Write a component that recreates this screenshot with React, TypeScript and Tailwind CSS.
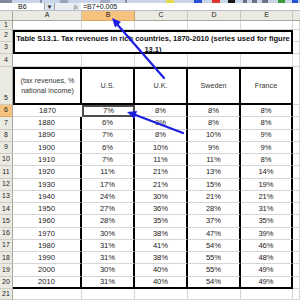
import React from "react";

const years = [1870,1880,1890,1900,1910,1920,1930,1940,1950,1960,1970,1980,1990,2000,2010];
const us = [7,6,7,6,7,11,17,24,27,28,30,31,31,30,31];
const uk = [8,9,8,10,11,21,21,30,36,35,38,41,38,40,40];
const se = [8,8,10,9,11,13,15,21,28,37,47,54,55,55,54];
const fr = [8,8,9,9,8,14,19,21,31,35,39,46,48,49,49];

const rh = "bg-[#ebeae2] border-r border-r-[#a9a89c] border-b border-b-[#cfcdc2] flex items-center justify-center text-[7px] text-[#222]";
const cell = "border-r border-r-[#d6d6d6] border-b border-b-[#d6d6d6]";
const txt = "flex items-center justify-center text-[7.6px] text-[#222]";

function RowHead({ n, sel, bottom }: { n: number; sel?: boolean; bottom?: boolean }) {
  return (
    <div
      className={
        sel
          ? "bg-[#f7c27d] border-r border-r-[#a9a89c] border-b border-b-[#d9a860] flex items-center justify-center text-[7px] text-[#222]"
          : bottom
          ? "bg-[#ebeae2] border-r border-r-[#a9a89c] border-b border-b-[#cfcdc2] flex items-end justify-center pb-[1px] text-[7px] text-[#222]"
          : rh
      }
    >
      {n}
    </div>
  );
}

export default function App() {
  const dataRows = years.map((y, i) => {
    const n = i + 6;
    const last = i === years.length - 1;
    const sel = i === 0;
    const bb = last ? " border-b-2 border-b-black" : "";
    return (
      <React.Fragment key={y}>
        <RowHead n={n} sel={sel} />
        <div className={`${txt} border-b border-b-[#d6d6d6] ${sel ? "" : "border-r-2 border-r-black"}${bb}`}>{y}</div>
        <div className={`${txt} ${sel ? "border-2 border-[#4d4d4d]" : "border-r-2 border-r-black border-b border-b-[#d6d6d6]"}${bb}`}>{us[i]}%</div>
        <div className={`${txt} border-r-2 border-r-black border-b border-b-[#d6d6d6]${bb}`}>{uk[i]}%</div>
        <div className={`${txt} border-r-2 border-r-black border-b border-b-[#d6d6d6]${bb}`}>{se[i]}%</div>
        <div className={`${txt} border-r-2 border-r-black border-b border-b-[#d6d6d6]${bb}`}>{fr[i]}%</div>
        <div className={cell}></div>
      </React.Fragment>
    );
  });

  return (
    <div className="relative w-[300px] h-[300px] overflow-hidden bg-white" style={{ fontFamily: '"Liberation Sans", Arial, sans-serif' }}>
      {/* toolbar strip */}
      <div className="h-[3px] bg-[#c8d5ea]">
        <svg width="300" height="3" className="block">
          <rect x="0" y="0" width="12" height="3" fill="#7e8aa0" />
          <rect x="40" y="0" width="2" height="3" fill="#8894a8" />
          <rect x="60" y="0" width="8" height="3" fill="#9aa4b8" />
          <rect x="100" y="0" width="10" height="3" fill="#a3acc0" />
          <rect x="125" y="0" width="2" height="3" fill="#8894a8" />
          <rect x="166" y="0" width="8" height="3" fill="#e8d84a" />
          <rect x="194" y="0" width="8" height="3" fill="#2a4fd8" />
          <rect x="212" y="0" width="8" height="3" fill="#e03030" />
          <rect x="228" y="0" width="7" height="3" fill="#1a1a1a" />
          <rect x="243" y="0" width="4" height="3" fill="#6a7488" />
          <rect x="252" y="0" width="5" height="3" fill="#6a7488" />
          <rect x="262" y="0" width="6" height="3" fill="#6a7488" />
          <rect x="278" y="0" width="7" height="3" fill="#3c9a3c" />
          <rect x="292" y="0" width="6" height="3" fill="#2a4fd8" />
        </svg>
      </div>
      {/* formula bar */}
      <div className="h-[8px] flex items-stretch bg-[#e9ecf2] border-b border-b-[#b9bdc6]">
        <div className="w-[45px] bg-white border-r border-r-[#9aa3b0] flex items-center pl-[18px] text-[7px] leading-none text-[#111]">B6</div>
        <div className="w-[10px] bg-[#dfe5ee] border-r border-r-[#9aa3b0] flex items-center justify-center text-[6px] leading-none text-[#222]">▼</div>
        <div className="w-[26px] flex items-center justify-end pr-[3px] text-[6px] italic leading-none text-[#555]" style={{ fontFamily: '"Liberation Serif", serif' }}>fx</div>
        <div className="flex-1 bg-white flex items-center pl-[2px] text-[7px] leading-none text-[#111]">=B7+0.005</div>
      </div>
      {/* sheet */}
      <div className="grid h-[289px] grid-cols-[13px_69px_53px_53px_53px_52px_1fr] grid-rows-[10px_9px_12px_12px_13px_38px_repeat(15,12.267px)_1fr]">
        {/* column headers */}
        <div className="bg-[#ebeae2] border-r border-r-[#a9a89c] border-b border-b-[#a9a89c]"></div>
        <div className="bg-[#ebeae2] border-r border-r-[#c9c7bb] border-b border-b-[#a9a89c] flex items-center justify-center text-[7px] text-[#222]">A</div>
        <div className="bg-[#f7c27d] border-r border-r-[#c9a070] border-b border-b-[#d9a860] flex items-center justify-center text-[7px] text-[#222]">B</div>
        <div className="bg-[#ebeae2] border-r border-r-[#c9c7bb] border-b border-b-[#a9a89c] flex items-center justify-center text-[7px] text-[#222]">C</div>
        <div className="bg-[#ebeae2] border-r border-r-[#c9c7bb] border-b border-b-[#a9a89c] flex items-center justify-center text-[7px] text-[#222]">D</div>
        <div className="bg-[#ebeae2] border-r border-r-[#c9c7bb] border-b border-b-[#a9a89c] flex items-center justify-center text-[7px] text-[#222]">E</div>
        <div className="bg-[#ebeae2] border-b border-b-[#a9a89c]"></div>

        {/* row 1 */}
        <RowHead n={1} />
        <div className={cell}></div>
        <div className={cell}></div>
        <div className={cell}></div>
        <div className={cell}></div>
        <div className={cell}></div>
        <div className={cell}></div>

        {/* rows 2-3 merged title */}
        <RowHead n={2} />
        <div className="col-span-5 row-span-2 border-2 border-black flex flex-col items-center justify-center pt-[3px] text-[7.5px] font-bold leading-[11px] text-[#111] whitespace-nowrap">
          <span>Table S13.1. Tax revenues in rich countries, 1870-2010 (series used for figure</span>
          <span>13.1)</span>
        </div>
        <div className={cell}></div>
        <RowHead n={3} />
        <div className={cell}></div>

        {/* row 4 */}
        <RowHead n={4} />
        <div className={cell}></div>
        <div className={cell}></div>
        <div className={cell}></div>
        <div className={cell}></div>
        <div className={cell}></div>
        <div className={cell}></div>

        {/* row 5 header */}
        <RowHead n={5} bottom />
        <div className="border-2 border-black flex flex-col items-center justify-center text-[7.2px] leading-[10px] text-[#333]">
          <span>(tax revenues, %</span>
          <span>national income)</span>
        </div>
        <div className="border-y-2 border-r-2 border-black flex items-center justify-center text-[7.2px] text-[#333]">U.S.</div>
        <div className="border-y-2 border-r-2 border-black flex items-center justify-center text-[7.2px] text-[#333]">U.K.</div>
        <div className="border-y-2 border-r-2 border-black flex items-center justify-center text-[7.2px] text-[#333]">Sweden</div>
        <div className="border-y-2 border-r-2 border-black flex items-center justify-center text-[7.2px] text-[#333]">France</div>
        <div className={cell}></div>

        {dataRows}

        {/* row 21 */}
        <RowHead n={21} />
        <div className={cell}></div>
        <div className={cell}></div>
        <div className={cell}></div>
        <div className={cell}></div>
        <div className={cell}></div>
        <div className={cell}></div>
      </div>

      {/* blue arrows */}
      <svg className="absolute left-0 top-0 pointer-events-none" width="300" height="300">
        <line x1="164" y1="78" x2="116" y2="23" stroke="#1e1ee0" strokeWidth="2.2" strokeLinecap="round" />
        <polygon points="112,18 121,22 115,27.5" fill="#1e1ee0" />
        <line x1="183" y1="133" x2="133" y2="114" stroke="#1e1ee0" strokeWidth="2.2" strokeLinecap="round" />
        <polygon points="127,112 137,111 134.5,119" fill="#1e1ee0" />
      </svg>
    </div>
  );
}
